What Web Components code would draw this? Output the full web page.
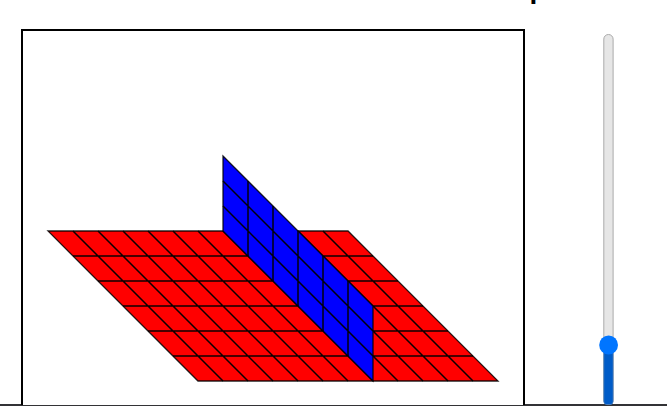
<!DOCTYPE html>
<html lang="en">
<head>
<meta charset="utf-8">
<title>Planes</title>
<style>
  body {
    margin: 0;
    height: 406px;
    overflow: hidden;
    background: #fff;
    font-family: "Liberation Sans", Arial, sans-serif;
  }
</style>
</head>
<body>
<plane-page>
  <span slot="title">p</span>
  <plane-view slot="view"></plane-view>
  <vertical-slider slot="control" value="60"></vertical-slider>
</plane-page>

<script>
  class PlanePage extends HTMLElement {
    constructor() {
      super();
      this.attachShadow({ mode: 'open' }).innerHTML = `
        <style>
          :host {
            display: flex;
            flex-direction: column;
            height: 406px;
            overflow: hidden;
            background: linear-gradient(#333336, #333336) 0 100% / 100% 2px no-repeat #fff;
          }
          h1 {
            margin: -27px 0 0 529.5px;
            height: 56px;
            font-size: 28px;
            line-height: 32px;
            flex: none;
          }
          main {
            display: grid;
            grid-template-columns: 504px 20px;
            column-gap: 73px;
            padding-left: 21px;
            height: 377px;
          }
        </style>
        <h1><slot name="title"></slot></h1>
        <main>
          <slot name="view"></slot>
          <slot name="control"></slot>
        </main>
      `;
    }
  }

  // Two planes, the upright one on top of the floor
  class PlaneView extends HTMLElement {
    constructor() {
      super();
      this.attachShadow({ mode: 'open' }).innerHTML = `
        <style>
          :host {
            display: block;
            box-sizing: border-box;
            width: 504px;
            height: 376px;
            border: 2px solid #000;
            border-bottom: 0;
            background: #fff;
            overflow: hidden;
          }
          svg {
            display: block;
          }
          path {
            fill: none;
            stroke: #000;
            stroke-width: 1.5;
            stroke-opacity: 0.95;
          }
          path.edge {
            stroke-width: 1.3;
            stroke-opacity: 0.85;
          }
        </style>
        <svg width="500" height="500" viewBox="0 0 500 500">
          ${this.plane([25, 200], [25, 0], 12, [25, 25], 6, '#f00')}
          ${this.plane([200, 125], [25, 25], 6, [0, 25], 3, '#00f')}
        </svg>
      `;
    }

    // A grid of nu by nv cells, spanned by the vectors u and v
    plane([x, y], u, nu, v, nv, color) {
      const at = (i, j) => `${x + i * u[0] + j * v[0]} ${y + i * u[1] + j * v[1]}`;
      const outline = `M${at(0, 0)}L${at(nu, 0)}L${at(nu, nv)}L${at(0, nv)}Z`;
      let lines = '';

      for (let i = 1; i < nu; i++) {
        lines += `M${at(i, 0)}L${at(i, nv)}`;
      }
      for (let j = 1; j < nv; j++) {
        lines += `M${at(0, j)}L${at(nu, j)}`;
      }

      return `<path class="edge" d="${outline}" style="fill: ${color}"/><path d="${lines}"/>`;
    }
  }

  class VerticalSlider extends HTMLElement {
    constructor() {
      super();
      this.attachShadow({ mode: 'open' }).innerHTML = `
        <style>
          :host {
            display: flex;
            justify-content: center;
            height: 371px;
            margin-top: 5px;
          }
          svg {
            display: block;
            overflow: visible;
          }
        </style>
        <svg width="20" height="372" viewBox="0 0 20 372">
          <rect x="5.8" y="0.5" width="9.3" height="370" rx="4.6" fill="#e6e6e6" stroke="#aaa"/>
          <path class="fill" fill="#005cc8" stroke="#4c7db8" stroke-width="0.8"/>
          <circle class="thumb" cx="10.6" r="9.4" fill="#0075ff"/>
        </svg>
      `;
    }

    static get observedAttributes() {
      return ['value'];
    }

    attributeChangedCallback(name) {
      if (name === 'value') {
        const y = 371 - parseInt(this.getAttribute('value'));
        this.shadowRoot
          .querySelector('.fill')
          .setAttribute('d', `M5.8 ${y}V367.5Q5.8 370.6 8.9 370.6H12.1Q15.1 370.6 15.1 367.5V${y}Z`);
        this.shadowRoot.querySelector('.thumb').setAttribute('cy', y);
      }
    }
  }

  customElements.define('plane-page', PlanePage);
  customElements.define('plane-view', PlaneView);
  customElements.define('vertical-slider', VerticalSlider);
</script>
</body>
</html>
